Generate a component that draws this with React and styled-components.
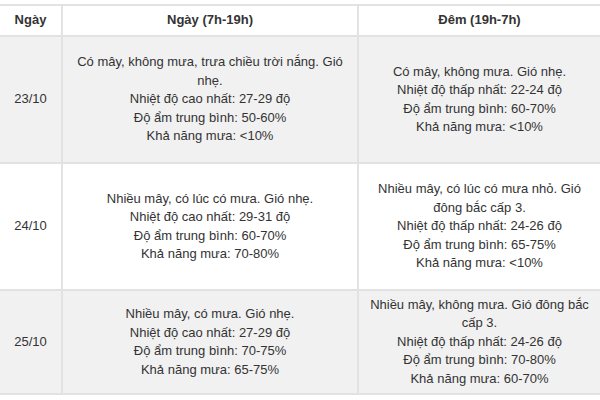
import React from 'react';
import styled, { createGlobalStyle } from 'styled-components';

const GlobalStyle = createGlobalStyle`
  html, body {
    margin: 0;
    padding: 0;
    background: #fff;
  }
  body {
    font-family: "Liberation Sans", Arial, sans-serif;
    color: #333;
  }
`;

const Table = styled.table`
  margin-top: 4px;
  width: 600px;
  table-layout: fixed;
  border-collapse: separate;
  border-spacing: 0;
  border-top: 2px solid #e2e2e2;
  font-size: 13px;
  line-height: 18.5px;
`;

const Row = styled.tr`
  background: ${p => (p.$shaded ? '#f1f1f1' : '#fff')};
`;

const HeadCell = styled.th`
  box-sizing: border-box;
  height: 31px;
  padding: 0 10px;
  font-weight: bold;
  text-align: center;
  vertical-align: middle;
  border-bottom: 2px solid #e2e2e2;
  & + & {
    border-left: 2px solid #e2e2e2;
  }
`;

const Cell = styled.td`
  box-sizing: border-box;
  height: ${p => p.$h}px;
  padding: 0 10px;
  text-align: center;
  vertical-align: middle;
  border-bottom: 2px solid #e2e2e2;
  & + & {
    border-left: 2px solid #e2e2e2;
  }
`;

const DateCell = styled(Cell)`
  padding: 0;
`;

const Line = styled.div``;

const rows = [
  {
    date: '23/10',
    h: 127,
    day: [
      'Có mây, không mưa, trưa chiều trời nắng. Gió nhẹ.',
      'Nhiệt độ cao nhất: 27-29 độ',
      'Độ ẩm trung bình: 50-60%',
      'Khả năng mưa: <10%',
    ],
    night: [
      'Có mây, không mưa. Gió nhẹ.',
      'Nhiệt độ thấp nhất: 22-24 độ',
      'Độ ẩm trung bình: 60-70%',
      'Khả năng mưa: <10%',
    ],
  },
  {
    date: '24/10',
    h: 127,
    day: [
      'Nhiều mây, có lúc có mưa. Gió nhẹ.',
      'Nhiệt độ cao nhất: 29-31 độ',
      'Độ ẩm trung bình: 60-70%',
      'Khả năng mưa: 70-80%',
    ],
    night: [
      'Nhiều mây, có lúc có mưa nhỏ. Gió đông bắc cấp 3.',
      'Nhiệt độ thấp nhất: 24-26 độ',
      'Độ ẩm trung bình: 65-75%',
      'Khả năng mưa: <10%',
    ],
  },
  {
    date: '25/10',
    h: 104,
    day: [
      'Nhiều mây, có mưa. Gió nhẹ.',
      'Nhiệt độ cao nhất: 27-29 độ',
      'Độ ẩm trung bình: 70-75%',
      'Khả năng mưa: 65-75%',
    ],
    night: [
      'Nhiều mây, không mưa. Gió đông bắc cấp 3.',
      'Nhiệt độ thấp nhất: 24-26 độ',
      'Độ ẩm trung bình: 70-80%',
      'Khả năng mưa: 60-70%',
    ],
  },
];

export default function App() {
  return (
    <>
      <GlobalStyle />
      <Table>
        <colgroup>
          <col style={{ width: 61 }} />
          <col style={{ width: 296 }} />
          <col />
        </colgroup>
        <thead>
          <Row>
            <HeadCell>Ngày</HeadCell>
            <HeadCell>Ngày (7h-19h)</HeadCell>
            <HeadCell>Đêm (19h-7h)</HeadCell>
          </Row>
        </thead>
        <tbody>
          {rows.map((r, i) => (
            <Row key={r.date} $shaded={i % 2 === 0}>
              <DateCell $h={r.h}>{r.date}</DateCell>
              <Cell $h={r.h}>
                {r.day.map(t => <Line key={t}>{t}</Line>)}
              </Cell>
              <Cell $h={r.h}>
                {r.night.map(t => <Line key={t}>{t}</Line>)}
              </Cell>
            </Row>
          ))}
        </tbody>
      </Table>
    </>
  );
}
